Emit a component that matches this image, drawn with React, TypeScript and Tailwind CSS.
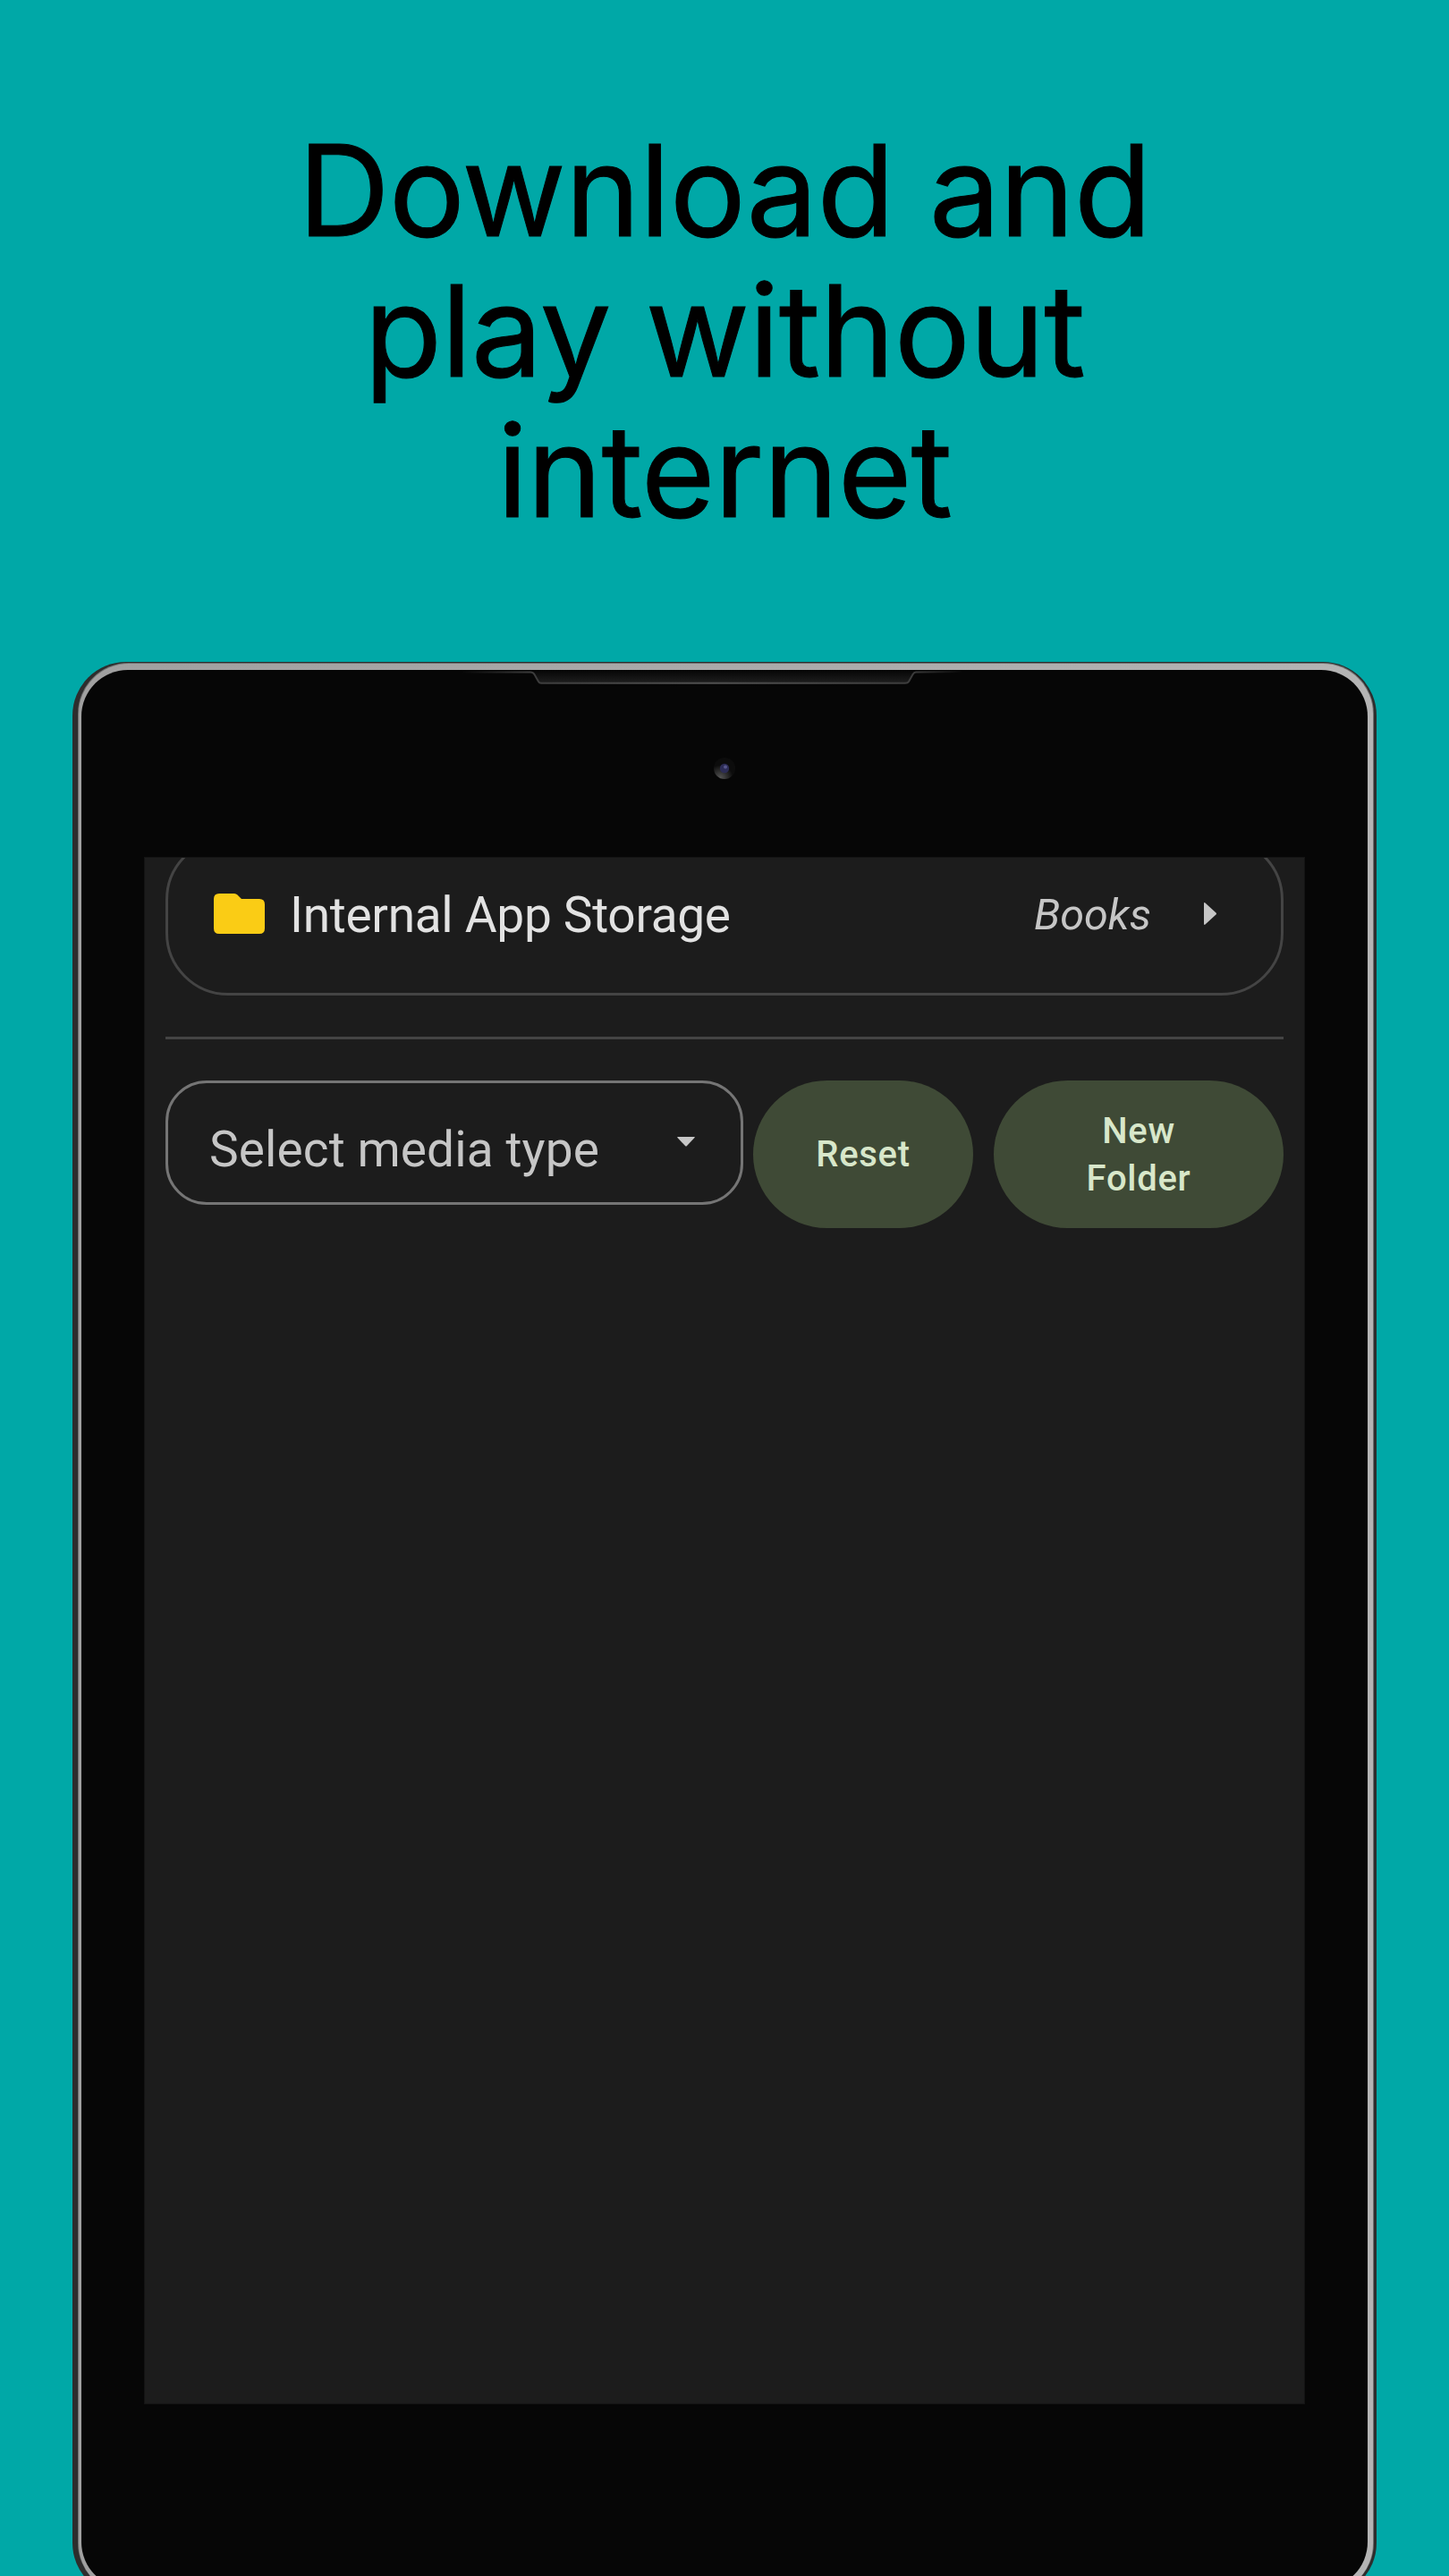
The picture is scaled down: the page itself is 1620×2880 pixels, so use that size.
import React from "react";

function Notch() {
  return (
    <svg className="absolute left-[425px] top-0 h-[20px] w-[560px]" viewBox="516 749 560 20" fill="none">
      <defs>
        <linearGradient id="lip" x1="516" x2="1076" y1="0" y2="0" gradientUnits="userSpaceOnUse">
          <stop offset="0" stopColor="#3a3a3a" stopOpacity="0" />
          <stop offset="0.14" stopColor="#3c3c3c" />
          <stop offset="0.5" stopColor="#505050" />
          <stop offset="0.9" stopColor="#3c3c3c" />
          <stop offset="1" stopColor="#3a3a3a" stopOpacity="0" />
        </linearGradient>
        <linearGradient id="well" x1="0" x2="0" y1="749" y2="764" gradientUnits="userSpaceOnUse">
          <stop offset="0" stopColor="#050505" />
          <stop offset="1" stopColor="#1f1f1f" />
        </linearGradient>
      </defs>
      <path d="M595 750L603 763.5H1015L1022 750Z" fill="url(#well)" />
      <path d="M516 751.5H593Q596 751.5 597.5 754L602 762Q603 763.8 605 763.8H1012Q1015 763.8 1016 762L1020.5 754Q1022 751.5 1024 751.4L1076 751" stroke="url(#lip)" strokeWidth="2" />
    </svg>
  );
}

function Camera() {
  return (
    <svg className="absolute left-[707px] top-[98px] h-[24px] w-[24px]" viewBox="0 0 24 24">
      <defs>
        <radialGradient id="ring" cx="0.3" cy="0.95" r="0.6">
          <stop offset="0" stopColor="#555555" />
          <stop offset="1" stopColor="#0c0c0c" />
        </radialGradient>
      </defs>
      <circle cx="12" cy="12" r="12" fill="url(#ring)" />
      <circle cx="12" cy="12" r="5.2" fill="#2c2c55" />
      <circle cx="13" cy="10.6" r="2" fill="#55558a" />
    </svg>
  );
}

function StorageCard() {
  return (
    <div className="-mt-[23px] flex h-[177px] items-center rounded-[70px] border-[3px] border-[#444444] pl-[51px] pr-[72px] pb-[7px]">
      <svg className="h-[45px] w-[57px] shrink-0" viewBox="0 0 57 45">
        <path d="M6 0H23Q25 0 26.500 1.500L31 6H51Q57 6 57 12V39Q57 45 51 45H6Q0 45 0 39V6Q0 0 6 0Z" fill="#facc15" />
      </svg>
      <span className="ml-[28px] whitespace-nowrap pt-[4px] font-['Roboto'] text-[55px] leading-[60px] tracking-[-0.3px] text-[#e2e2e2]">Internal App Storage</span>
      <span className="ml-auto whitespace-nowrap pt-[3px] font-['Roboto'] text-[48.500px] italic leading-[60px] text-[#c6c6c6]">Books</span>
      <svg className="ml-[59px] h-[25px] w-[14px] shrink-0" viewBox="0 0 14 25">
        <path d="M0 1.500Q0 -1 2 1L13.500 11.500Q14.500 12.500 13.500 13.500L2 24Q0 26 0 23.500Z" fill="#c6c6c6" />
      </svg>
    </div>
  );
}

function Toolbar() {
  return (
    <div className="mt-[46px] flex items-start">
      <div className="flex h-[139px] w-[646px] items-center justify-between rounded-[46px] border-[3px] border-[#757575] pl-[46px] pr-[51px]">
        <span className="whitespace-nowrap pt-[14px] font-['Roboto'] text-[55px] leading-[64px] tracking-[0.1px] text-[#c6c6c6]">Select media type</span>
        <svg className="mb-[3px] h-[11px] w-[20px]" viewBox="0 0 20 11">
          <path d="M1 0H19Q20.500 0 19.500 1L11 10Q10 11 9 10L0.500 1Q-0.500 0 1 0Z" fill="#c6c6c6" />
        </svg>
      </div>
      <button className="ml-[11px] h-[165px] w-[246px] rounded-full bg-[#3f4a36] font-['Roboto'] text-[40px] font-medium leading-[53px] tracking-[0.7px] text-[#d8e7ca]">Reset</button>
      <button className="ml-[23px] h-[165px] w-[324px] rounded-full bg-[#3f4a36] font-['Roboto'] text-[40px] font-medium leading-[53px] tracking-[0.7px] text-[#d8e7ca]">
        New
        <br />
        Folder
      </button>
    </div>
  );
}

export default function App() {
  return (
    <div className="h-[2880px] w-[1620px] overflow-hidden bg-[#00a8a7]">
      <h1 className="h-[740px] pt-[134px] text-center font-['Inter'] text-[142px] font-normal leading-[157px] tracking-[-0.8px] text-black [-webkit-text-stroke:1px_black]">
        Download and
        <br />
        play without
        <br />
        internet
      </h1>
      <div className="ml-[81px] h-[2163px] w-[1458px] rounded-[60px] bg-[#2d2d2d] pb-[3px] pl-[6px] pr-[3px] pt-[1px]">
        <div className="h-full rounded-[57px] bg-[#6e6e6e] pl-[1px] pr-[1px] pt-[1px]">
          <div className="h-full rounded-[56px] bg-linear-to-r from-[#a0a0a0] to-[#b4b4b4] pb-[6px] pl-[3px] pr-[6px] pt-[7px]">
            <div className="relative h-full rounded-[52px] bg-[#060606] px-[70px] pt-[209px]">
              <Notch />
              <Camera />
              <main className="h-[1730px] w-[1298px] overflow-hidden border border-[#141414] bg-[#1c1c1c] px-[23px]">
                <StorageCard />
                <div className="mt-[46px] h-[3px] bg-[#444444]" />
                <Toolbar />
              </main>
            </div>
          </div>
        </div>
      </div>
    </div>
  );
}
